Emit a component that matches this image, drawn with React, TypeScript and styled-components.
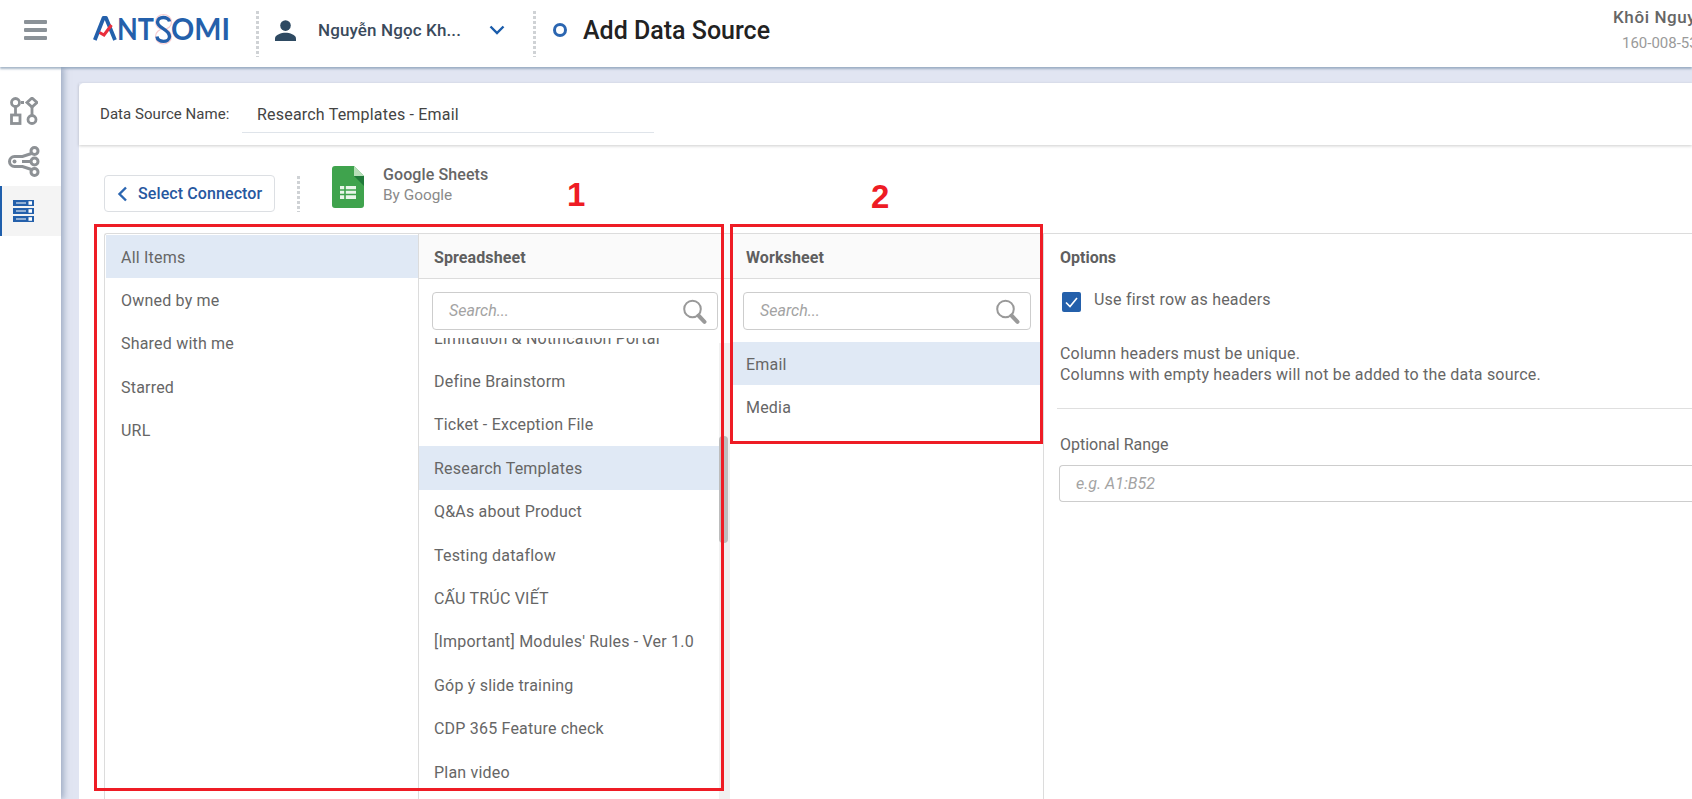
import React from "react";
import styled, { createGlobalStyle } from "styled-components";

const Global = createGlobalStyle`
  html, body { margin: 0; padding: 0; height: 100%; overflow: hidden; background: #fff; }
  body { font-family: Roboto, "Noto Sans", "Liberation Sans", sans-serif; }
  #root { height: 100%; }
  * { box-sizing: border-box; }
`;

const Page = styled.div`
  position: relative;
  height: 100%;
  display: flex;
  flex-direction: column;
  overflow: hidden;
`;

const TopBar = styled.header`
  position: relative;
  z-index: 3;
  flex: 0 0 67px;
  display: flex;
  align-items: center;
  padding-bottom: 7px;
  background: #fff;
  box-shadow: 0 2px 2px rgba(120, 145, 170, 0.65);
  white-space: nowrap;
`;

const Burger = styled.svg`
  flex: none;
  margin-left: 24px;
  width: 23px;
  height: 20px;
  color: #8b9298;
`;

const LogoBox = styled.svg`
  flex: none;
  margin-left: 46px;
  width: 140px;
  height: 50px;
`;

const Dotted = styled.span<{ $h: number; $left: number }>`
  flex: none;
  width: 3px;
  height: ${(p) => p.$h}px;
  margin-left: ${(p) => p.$left}px;
  background: repeating-linear-gradient(to bottom, #cfd2d5 0 3px, transparent 3px 5px);
`;

const HeaderDots = styled(Dotted)`
  margin-top: 7px;
`;

const UserIcon = styled.svg`
  flex: none;
  margin-left: 16px;
  width: 21px;
  height: 21px;
  color: #2e4a62;
`;

const AccountName = styled.span`
  flex: none;
  width: 147px;
  margin-left: 22px;
  font-size: 17px;
  letter-spacing: 0.12px;
  font-weight: 500;
  color: #3a4a5c;
`;

const ChevronIcon = styled.svg`
  flex: none;
  margin-left: 24px;
  width: 16px;
  height: 10px;
  color: #1a5cab;
`;

const Ring = styled.span`
  flex: none;
  margin-left: 17px;
  width: 14px;
  height: 14px;
  border: 3px solid #2b66b1;
  border-radius: 50%;
`;

const PageTitle = styled.h1`
  flex: 0 0 1030px;
  margin: 0 0 0 16px;
  font-size: 25px;
  font-weight: 500;
  color: #222;
`;

const AccountBox = styled.div`
  flex: none;
  display: flex;
  flex-direction: column;
  gap: 7px;
  margin-top: -1px;
`;

const AccountOwner = styled.div`
  font-size: 17px;
  letter-spacing: 0.6px;
  font-weight: 500;
  color: #666;
`;

const AccountId = styled.div`
  padding-left: 9px;
  font-size: 15px;
  color: #9a9a9a;
`;

const Main = styled.div`
  flex: 1;
  min-height: 0;
  display: flex;
  background: #e1e5f2;
`;

const SideNav = styled.nav`
  position: relative;
  z-index: 2;
  flex: 0 0 61px;
  display: flex;
  flex-direction: column;
  padding-top: 22px;
  background: #fff;
  box-shadow: 3px 0 6px rgba(110, 130, 160, 0.55);
`;

const NavItem = styled.div<{ $active?: boolean; $h: number; $top?: number; $right: number }>`
  height: ${(p) => p.$h}px;
  display: flex;
  align-items: center;
  justify-content: center;
  padding: ${(p) => p.$top ?? 0}px ${(p) => p.$right}px 0 0;
  color: #8d9195;
  background: ${(p) => (p.$active ? "#f4f4f4" : "transparent")};
  border-left: 2px solid ${(p) => (p.$active ? "#1f5fac" : "transparent")};
`;

const Content = styled.main`
  flex: 1;
  min-width: 0;
  padding: 16px 0 0 18px;
`;

const Card = styled.div`
  height: 100%;
  display: flex;
  flex-direction: column;
  background: #fff;
  border-top-left-radius: 5px;
`;

const NameBar = styled.div`
  flex: 0 0 62px;
  display: flex;
  align-items: center;
  padding-left: 21px;
  box-shadow: 0 1px 3px rgba(0, 0, 0, 0.2);
`;

const NameLabel = styled.span`
  width: 142px;
  font-size: 15px;
  letter-spacing: 0.05px;
  color: #444;
`;

const NameValue = styled.div`
  width: 412px;
  height: 36px;
  padding: 0 0 0 15px;
  display: flex;
  align-items: center;
  border-bottom: 1px solid #dfe4ea;
  font-size: 16px;
  letter-spacing: 0.2px;
  color: #444;
  margin-top: 1px;
`;

const ConnectorBar = styled.div`
  flex: 0 0 88px;
  display: flex;
  align-items: flex-start;
  padding-left: 25px;
`;

const BackButton = styled.div`
  flex: none;
  margin-top: 30px;
  width: 171px;
  height: 37px;
  display: flex;
  align-items: center;
  gap: 10px;
  padding-left: 12px;
  background: #fff;
  border: 1px solid #dcdfe3;
  border-radius: 4px;
  font-size: 16px;
  letter-spacing: 0.1px;
  font-weight: 500;
  color: #27589f;
`;

const BackGlyph = styled.svg`
  flex: none;
  width: 11px;
  height: 16px;
  color: #2b66b1;
`;

const ConnectorDots = styled(Dotted)`
  margin-top: 31px;
`;

const SheetIcon = styled.svg`
  flex: none;
  margin: 21px 0 0 32px;
  width: 32px;
  height: 42px;
`;

const ConnectorInfo = styled.div`
  margin: 20px 0 0 19px;
  display: flex;
  flex-direction: column;
  gap: 2px;
`;

const ConnectorName = styled.div`
  font-size: 16px;
  letter-spacing: 0.1px;
  font-weight: 500;
  color: #666;
`;

const ConnectorBy = styled.div`
  font-size: 15.4px;
  color: #8a8a8a;
`;

const Panel = styled.div`
  flex: 1;
  min-height: 0;
  margin-left: 25px;
  display: flex;
  border-top: 1px solid #dcdcdc;
  border-left: 1px solid #dcdcdc;
  border-top-left-radius: 3px;
`;

const CategoryColumn = styled.div`
  flex: 0 0 313px;
  padding: 1px 0 0 1px;
`;

const Row = styled.div<{ $selected?: boolean; $pad: number }>`
  height: 43.4px;
  display: flex;
  align-items: center;
  padding: 1px 0 0 ${(p) => p.$pad}px;
  font-size: 16px;
  letter-spacing: 0.2px;
  white-space: nowrap;
  color: #666;
  background: ${(p) => (p.$selected ? "#e0e9f5" : "transparent")};
`;

const SheetColumn = styled.div`
  flex: 0 0 312px;
  display: flex;
  flex-direction: column;
  min-height: 0;
  border-left: 1px solid #dcdcdc;
`;

const WorksheetColumn = styled.div`
  flex: 0 0 314px;
  display: flex;
  flex-direction: column;
  border-right: 1px solid #dcdcdc;
`;

const ColumnHead = styled.div<{ $pad: number }>`
  flex: 0 0 45px;
  display: flex;
  align-items: center;
  padding: 2px 0 0 ${(p) => p.$pad}px;
  background: #fafafa;
  border-bottom: 1px solid #dcdcdc;
  font-size: 16px;
  letter-spacing: 0.1px;
  font-weight: 700;
  color: #5f5f5f;
`;

const SearchBox = styled.div<{ $left: number; $width: number; $bottom: number }>`
  flex: none;
  margin: 13px 0 ${(p) => p.$bottom}px ${(p) => p.$left}px;
  width: ${(p) => p.$width}px;
  height: 38px;
  display: flex;
  align-items: center;
  justify-content: space-between;
  padding: 0 10px 0 16px;
  border: 1px solid #cdcdcd;
  border-radius: 4px;
  background: #fff;
`;

const Hint = styled.span`
  font-size: 16px;
  font-style: italic;
  color: #a3a3a3;
  margin-top: -1px;
`;

const SearchGlyph = styled.svg`
  flex: none;
  width: 25px;
  height: 25px;
  color: #999;
`;

const ScrollArea = styled.div`
  position: relative;
  flex: 1;
  min-height: 0;
  overflow: hidden;
`;

const ScrollInner = styled.div`
  margin-top: -22px;
  padding-right: 11px;
`;

const ScrollTrack = styled.div`
  position: absolute;
  top: 5px;
  right: 0;
  bottom: 0;
  width: 11px;
  background: #f1f1f1;
`;

const ScrollThumb = styled.div`
  margin: 93px 0 0 0;
  width: 9px;
  height: 107px;
  border-radius: 4px;
  background: #bdbdbd;
`;

const OptionsColumn = styled.div`
  flex: 1;
  min-width: 0;
  padding: 0 0 0 16px;
`;

const OptionsTitle = styled.div`
  height: 45px;
  display: flex;
  align-items: center;
  padding-top: 1px;
  font-size: 16px;
  font-weight: 700;
  color: #5f5f5f;
`;

const CheckRow = styled.div`
  margin: 13px 0 0 2px;
  display: flex;
  align-items: flex-start;
  gap: 13px;
`;

const CheckLabel = styled.span`
  font-size: 16px;
  line-height: 16px;
  letter-spacing: 0.2px;
  color: #666;
`;

const CheckBox = styled.span`
  flex: none;
  width: 19px;
  height: 20px;
  display: flex;
  align-items: center;
  justify-content: center;
  border-radius: 2px;
  background: #2460ab;
  color: #fff;
`;

const Note = styled.p`
  margin: 31px 0 0;
  font-size: 16px;
  letter-spacing: 0.2px;
  line-height: 21px;
  color: #666;
`;

const Rule = styled.hr`
  margin: 23px 0 0 -3px;
  border: 0;
  border-top: 1px solid #dfdfdf;
`;

const FieldLabel = styled.div`
  margin-top: 27px;
  font-size: 16px;
  line-height: 18px;
  color: #666;
`;

const RangeBox = styled.div`
  margin: 11px 0 0 -1px;
  height: 37px;
  display: flex;
  align-items: center;
  padding-left: 16px;
  border: 1px solid #cdcdcd;
  border-right: 0;
  border-radius: 4px 0 0 4px;
`;

const Annotation = styled.div<{ $x: number; $y: number; $w: number; $h: number }>`
  position: absolute;
  z-index: 5;
  left: ${(p) => p.$x}px;
  top: ${(p) => p.$y}px;
  width: ${(p) => p.$w}px;
  height: ${(p) => p.$h}px;
  border: 3px solid #ee1c25;
  pointer-events: none;
`;

const AnnotationNumber = styled.div<{ $x: number; $y: number }>`
  position: absolute;
  z-index: 5;
  left: ${(p) => p.$x}px;
  top: ${(p) => p.$y}px;
  font-family: "Liberation Sans", Arial, sans-serif;
  font-size: 33px;
  line-height: 34px;
  font-weight: 700;
  color: #ee1c25;
`;

const SearchIcon = () => (
  <SearchGlyph viewBox="0 0 25 25" fill="none" stroke="currentColor">
    <circle cx="10.5" cy="10" r="8.3" strokeWidth="2" />
    <path d="M16.5 16.5l6 6.3" strokeWidth="4" strokeLinecap="round" />
  </SearchGlyph>
);

const files = [
  "Limitation & Notification Portal",
  "Define Brainstorm",
  "Ticket - Exception File",
  "Research Templates",
  "Q&As about Product",
  "Testing dataflow",
  "CẤU TRÚC VIẾT",
  "[Important] Modules' Rules - Ver 1.0",
  "Góp ý slide training",
  "CDP 365 Feature check",
  "Plan video",
  "Roadmap Q3",
];

export default function App() {
  return (
    <Page>
      <Global />
      <TopBar>
        <Burger viewBox="0 0 23 20" fill="currentColor">
          <rect y="0" width="23" height="4" rx="1" />
          <rect y="8" width="23" height="4" rx="1" />
          <rect y="16" width="23" height="4" rx="1" />
        </Burger>
        <LogoBox viewBox="0 -8 140 50" role="img" aria-label="ANTSOMI">
          <path d="M1.8 27 L10.5 5 L13 5 L22 27" fill="none" stroke="#2460ab" strokeWidth="3.8" strokeLinejoin="round" />
          <path d="M6.5 19.5 L11 22 L18.5 12" fill="none" stroke="#ea2e3c" strokeWidth="3" />
          <text x="24" y="27" fontFamily="Lato, Inter, sans-serif" fontSize="30" fontWeight="700" fill="#2460ab" textLength="37" lengthAdjust="spacingAndGlyphs">NT</text>
          <ellipse cx="70.5" cy="9" rx="8" ry="7.5" fill="none" stroke="#f8ccd0" strokeWidth="1.2" />
          <ellipse cx="70.5" cy="23.5" rx="8" ry="7.5" fill="none" stroke="#f8ccd0" strokeWidth="1.2" />
          <path d="M76.5 8.5 C75.5 3 64.5 3 64.5 9 C64.5 15.5 76.5 16 76.5 23.5 C76.5 30 64.5 30 64 23.5" fill="none" stroke="#2460ab" strokeWidth="3.4" />
          <text x="78" y="27" fontFamily="Lato, Inter, sans-serif" fontSize="30" fontWeight="700" fill="#2460ab" textLength="59" lengthAdjust="spacingAndGlyphs">OMI</text>
        </LogoBox>
        <HeaderDots $h={46} $left={23} />
        <UserIcon viewBox="0 0 21 21" fill="currentColor">
          <circle cx="10.5" cy="5.6" r="5.3" />
          <path d="M0 21v-2.6C0 14.5 6.6 12.7 10.5 12.7S21 14.5 21 18.4V21z" />
        </UserIcon>
        <AccountName>Nguyễn Ngọc Kh...</AccountName>
        <ChevronIcon viewBox="0 0 16 10" fill="none" stroke="currentColor" strokeWidth="2.4">
          <path d="M1.5 1.5L8 8l6.5-6.5" />
        </ChevronIcon>
        <HeaderDots $h={46} $left={28} />
        <Ring />
        <PageTitle>Add Data Source</PageTitle>
        <AccountBox>
          <AccountOwner>Khôi Nguyễn</AccountOwner>
          <AccountId>160-008-536</AccountId>
        </AccountBox>
      </TopBar>
      <Main>
        <SideNav>
          <NavItem $h={44} $right={15}>
            <svg width="28" height="28" viewBox="0 0 28 28" fill="none" stroke="currentColor" strokeWidth="2.8">
              <circle cx="5.5" cy="5.5" r="4" />
              <path d="M22 1l5 4.5-5 4.5-5-4.5z" />
              <rect x="1.5" y="18" width="8.5" height="8.5" />
              <circle cx="22" cy="22.5" r="4" />
              <path d="M5.5 10v7M22 10v8M11 5.5h3" />
            </svg>
          </NavItem>
          <NavItem $h={53} $top={3} $right={15}>
            <svg width="32" height="31" viewBox="0 0 32 31" fill="none" stroke="currentColor" strokeWidth="3">
              <circle cx="26.5" cy="5" r="3.5" />
              <circle cx="26.5" cy="15.5" r="3.5" />
              <circle cx="26.5" cy="26" r="3.5" />
              <path d="M23 15.5H14M23.5 7.5L14.5 10.5H6.5a5 5 0 000 10h8l9 3" />
              <circle cx="6.5" cy="15.5" r="2" fill="currentColor" stroke="none" />
            </svg>
          </NavItem>
          <NavItem $h={50} $active $right={17}>
            <svg width="21" height="22" viewBox="0 0 21 22" fill="#2460ab">
              <path d="M0 0h21v6H0zM0 8h21v6H0zM0 16h21v6H0z" />
              <path d="M3 2.4h10v1.2H3zM3 10.4h10v1.2H3zM3 18.4h10v1.2H3z" fill="#fff" />
              <path d="M15.5 1.2h3.5v3.6h-3.5zM15.5 9.2h3.5v3.6h-3.5zM15.5 17.2h3.5v3.6h-3.5z" fill="#fff" />
            </svg>
          </NavItem>
        </SideNav>
        <Content>
          <Card>
            <NameBar>
              <NameLabel>Data Source Name:</NameLabel>
              <NameValue>Research Templates - Email</NameValue>
            </NameBar>
            <ConnectorBar>
              <BackButton>
                <BackGlyph viewBox="0 0 11 16" fill="none" stroke="currentColor" strokeWidth="2.4">
                  <path d="M9 1.5L2.5 8 9 14.5" />
                </BackGlyph>
                Select Connector
              </BackButton>
              <ConnectorDots $h={36} $left={22} />
              <SheetIcon viewBox="0 0 32 42">
                <path d="M3 0h19l10 10v29a3 3 0 01-3 3H3a3 3 0 01-3-3V3a3 3 0 013-3z" fill="#3fa34d" />
                <path d="M22 0l10 10H22z" fill="#b7dfb9" />
                <path d="M22 10l10 10V10z" fill="#1f7a39" />
                <path d="M8 20h16v13H8z" fill="#e8f5e9" />
                <path d="M8 24h16M8 28.5h16M13 20v13" stroke="#3fa34d" strokeWidth="1.6" />
              </SheetIcon>
              <ConnectorInfo>
                <ConnectorName>Google Sheets</ConnectorName>
                <ConnectorBy>By Google</ConnectorBy>
              </ConnectorInfo>
            </ConnectorBar>
            <Panel>
              <CategoryColumn>
                <Row $pad={15} $selected>All Items</Row>
                <Row $pad={15}>Owned by me</Row>
                <Row $pad={15}>Shared with me</Row>
                <Row $pad={15}>Starred</Row>
                <Row $pad={15}>URL</Row>
              </CategoryColumn>
              <SheetColumn>
                <ColumnHead $pad={15}>Spreadsheet</ColumnHead>
                <SearchBox $left={13} $width={286} $bottom={8}>
                  <Hint>Search...</Hint>
                  <SearchIcon />
                </SearchBox>
                <ScrollArea>
                  <ScrollInner>
                    {files.map((f) => (
                      <Row key={f} $pad={15} $selected={f === "Research Templates"}>{f}</Row>
                    ))}
                  </ScrollInner>
                  <ScrollTrack>
                    <ScrollThumb />
                  </ScrollTrack>
                </ScrollArea>
              </SheetColumn>
              <WorksheetColumn>
                <ColumnHead $pad={16}>Worksheet</ColumnHead>
                <SearchBox $left={13} $width={288} $bottom={12}>
                  <Hint>Search...</Hint>
                  <SearchIcon />
                </SearchBox>
                <Row $pad={16} $selected>Email</Row>
                <Row $pad={16}>Media</Row>
              </WorksheetColumn>
              <OptionsColumn>
                <OptionsTitle>Options</OptionsTitle>
                <CheckRow>
                  <CheckBox>
                    <svg width="13" height="11" viewBox="0 0 13 11" fill="none" stroke="currentColor" strokeWidth="1.6">
                      <path d="M1 5.5l4 4L12 1" />
                    </svg>
                  </CheckBox>
                  <CheckLabel>Use first row as headers</CheckLabel>
                </CheckRow>
                <Note>
                  Column headers must be unique.
                  <br />
                  Columns with empty headers will not be added to the data source.
                </Note>
                <Rule />
                <FieldLabel>Optional Range</FieldLabel>
                <RangeBox>
                  <Hint>e.g. A1:B52</Hint>
                </RangeBox>
              </OptionsColumn>
            </Panel>
          </Card>
        </Content>
      </Main>
      <Annotation $x={94} $y={224} $w={630} $h={567} />
      <Annotation $x={730} $y={224} $w={313} $h={220} />
      <AnnotationNumber $x={567} $y={178}>1</AnnotationNumber>
      <AnnotationNumber $x={871} $y={180}>2</AnnotationNumber>
    </Page>
  );
}
